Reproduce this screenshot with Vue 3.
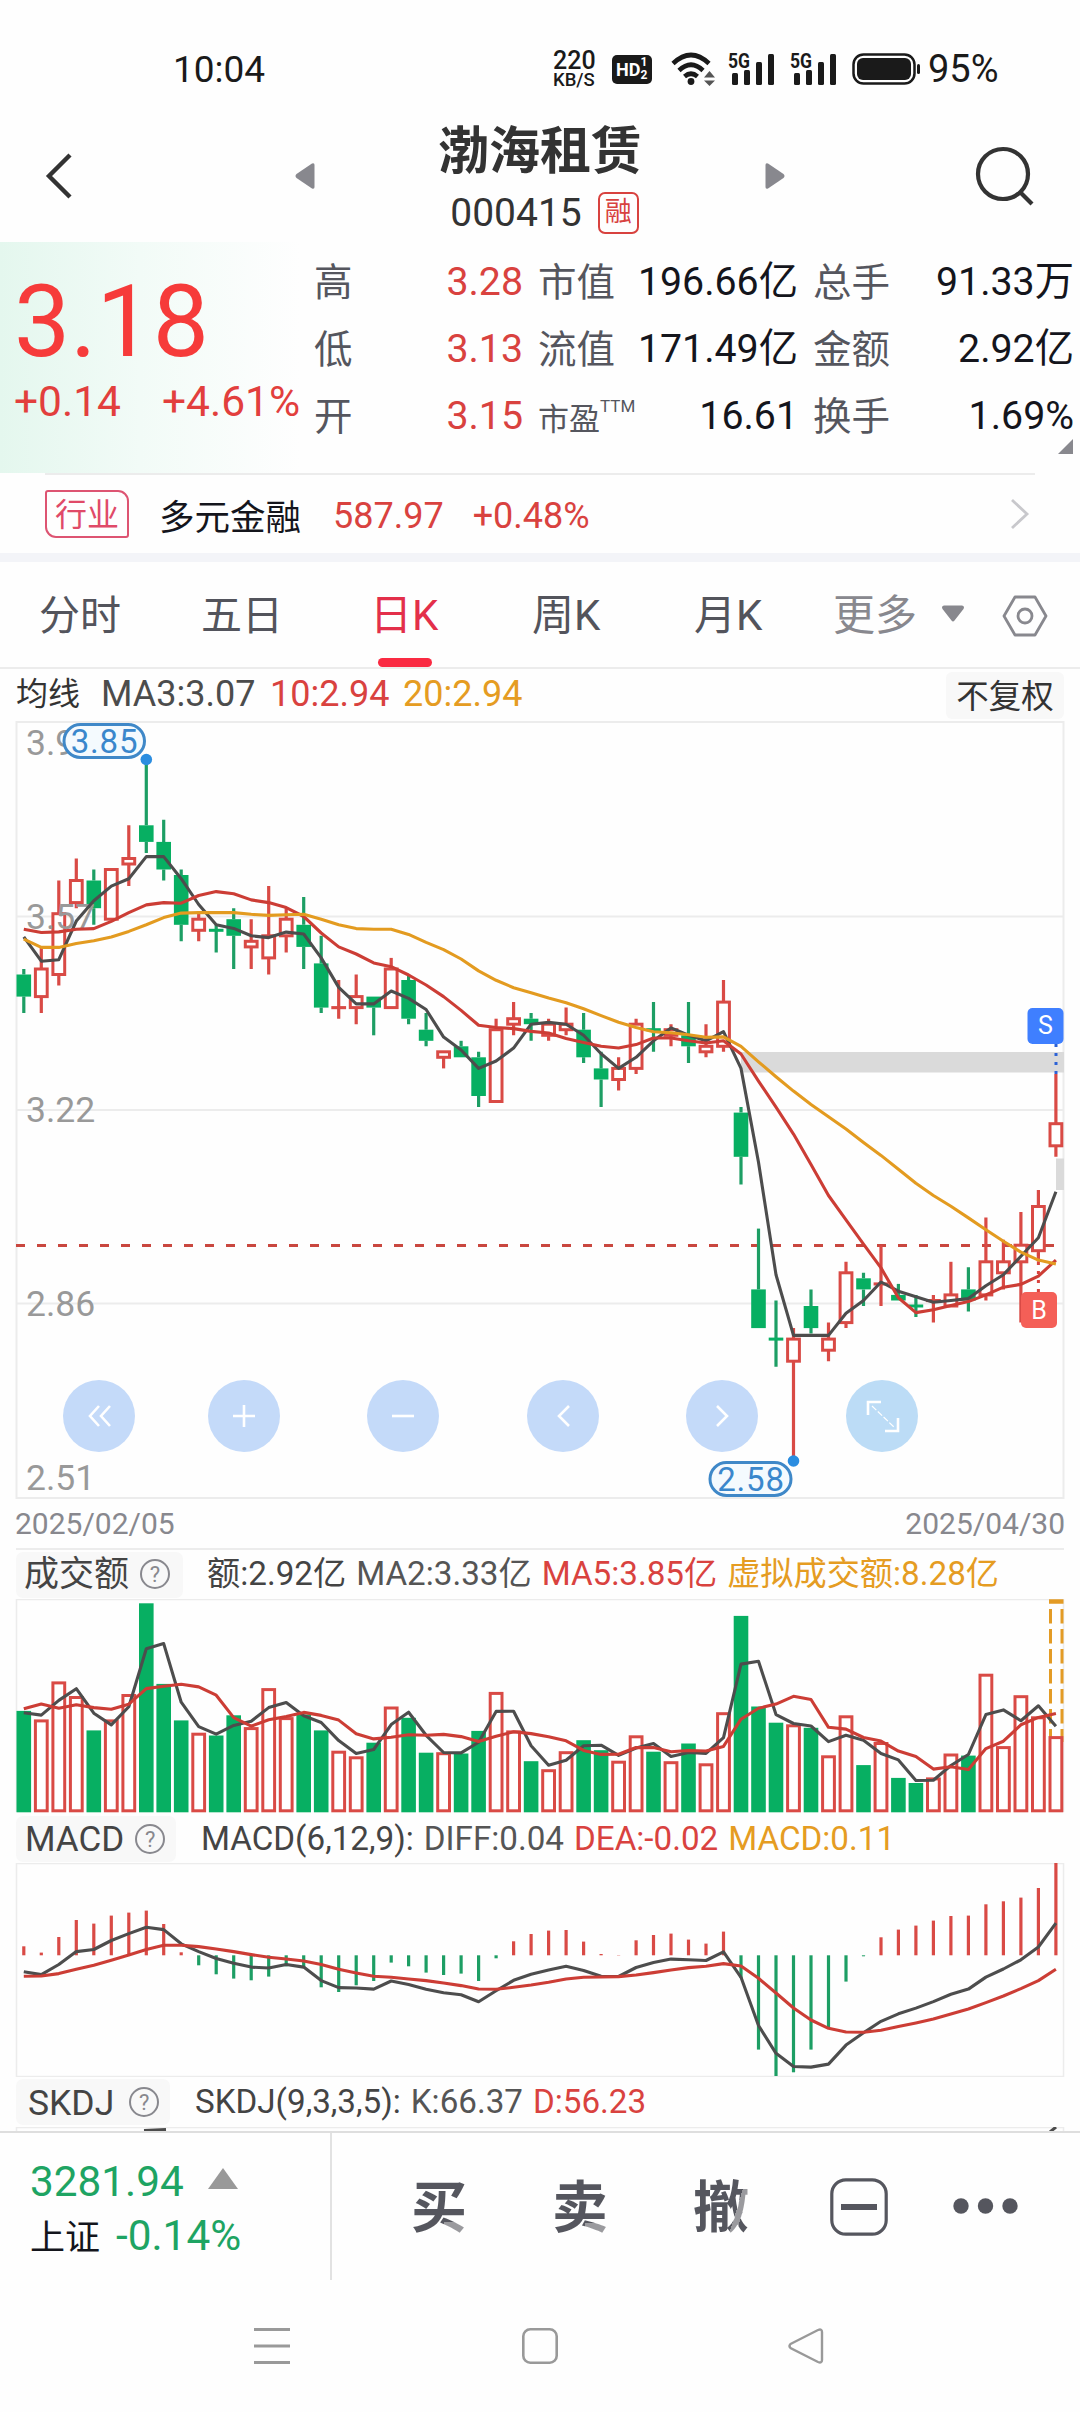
<template>
  <div class="page">
    <!-- 状态栏 -->
    <div class="status">
      <span class="time">10:04</span>
      <div class="speed">
        <b>220</b>
        <span>KB/S</span>
      </div>
      <div class="hd">HD<span><i>1</i><i>2</i></span></div>
      <svg class="wifi" width="46" height="34" viewBox="0 0 46 34">
        <g fill="none" stroke="#1a1a1a" stroke-width="4.6">
          <path d="M2 11.5 Q20 -5.500 38 11.500" />
          <path d="M8 18.500 Q20 7 32 18.500" />
          <path d="M13.500 24.500 Q20 19 26.500 24.500" />
        </g>
        <circle cx="20" cy="29.500" r="3.400" fill="#1a1a1a" />
        <path d="M38.500 19 l5.500 6.500 h-11 z M38.500 34 l5.500 -5.500 h-11 z" fill="#555" />
      </svg>
      <svg v-for="n in 2" :key="n" class="signal" width="48" height="34" viewBox="0 0 48 34">
        <text x="0" y="15.500" class="net" textLength="22" lengthAdjust="spacingAndGlyphs">5G</text>
        <rect x="4" y="21" width="6" height="12" rx="1.500" />
        <rect x="16" y="18" width="6" height="15" rx="1.500" />
        <rect x="28" y="10" width="6" height="23" rx="1.500" />
        <rect x="40" y="2" width="6" height="31" rx="1.500" />
      </svg>
      <svg class="battery" width="68" height="32" viewBox="0 0 68 32">
        <rect x="1.500" y="1.500" width="61" height="29" rx="10" fill="none" stroke="#1a1a1a" stroke-width="2.500" />
        <rect x="5" y="5" width="54" height="22" rx="6" fill="#1a1a1a" />
        <rect x="65" y="11" width="3" height="10" rx="1.500" fill="#1a1a1a" />
      </svg>
      <span class="percent">95%</span>
    </div>

    <!-- 标题 -->
    <div class="header">
      <svg class="back" width="30" height="48" viewBox="0 0 30 48">
        <path d="M26 3 L5 24 L26 45" fill="none" stroke="#333" stroke-width="4.400" />
      </svg>
      <svg width="20" height="28" viewBox="0 0 20 28">
        <path d="M1.500 12 L17 1.500 Q19.500 0.500 19.500 3 V25 Q19.500 27.500 17 26.500 L1.500 16 Q-0.500 14 1.500 12z" fill="#88888e" />
      </svg>
      <div class="stock">
        <h1>渤海租赁</h1>
        <div class="code">000415<span>融</span></div>
      </div>
      <svg width="20" height="28" viewBox="0 0 20 28">
        <path d="M18.500 12 L3 1.500 Q0.500 0.500 0.500 3 V25 Q0.500 27.500 3 26.500 L18.500 16 Q20.500 14 18.500 12z" fill="#88888e" />
      </svg>
      <svg class="search" width="60" height="60" viewBox="0 0 60 60">
        <g fill="none" stroke="#333" stroke-width="4.200">
          <circle cx="28" cy="28" r="25" />
          <path d="M45 46 L57 58" />
        </g>
      </svg>
    </div>

    <!-- 报价 -->
    <div class="quote">
      <div class="now">
        <div class="price">3.18</div>
        <div class="change"><span>+0.14</span><span>+4.61%</span></div>
      </div>
      <div class="cells">
        <template v-for="row in quotes" :key="row[0]">
          <span class="label">{{ row[0] }}</span>
          <span class="value red">{{ row[1] }}</span>
          <span class="label second" :class="{ small: row[6] }">{{ row[2] }}<sup v-if="row[6]">{{ row[6] }}</sup></span>
          <span class="value">{{ row[3] }}</span>
          <span class="label third">{{ row[4] }}</span>
          <span class="value">{{ row[5] }}</span>
        </template>
      </div>
      <i class="corner"></i>
    </div>

    <!-- 行业 -->
    <div class="industry">
      <span class="tag">行业</span>
      <span class="name">多元金融</span>
      <span class="red">587.97</span>
      <span class="red rate">+0.48%</span>
      <svg width="20" height="32" viewBox="0 0 20 32">
        <path d="M2 2 L17 16 L2 30" fill="none" stroke="#c8c8cc" stroke-width="2.800" />
      </svg>
    </div>

    <!-- 周期切换 -->
    <div class="tabs">
      <span v-for="tab in tabs" :key="tab" :class="{ active: tab === '日K' }">{{ tab }}</span>
      <span class="more">更多</span>
      <svg class="down" width="24" height="18" viewBox="0 0 24 18">
        <path d="M3 0.500 H21 Q24 1 22.500 4 L13.500 15.500 Q12 17.500 10.500 15.500 L1.500 4 Q0 1 3 0.500z" fill="#88888e" />
      </svg>
      <svg width="46" height="42" viewBox="0 0 46 42">
        <g fill="none" stroke="#88888e" stroke-width="2.800">
          <path d="M13 2 H33 L44 21 L33 40 H13 L2 21z" stroke-linejoin="round" />
          <circle cx="23" cy="21" r="7" />
        </g>
      </svg>
    </div>

    <!-- 均线 -->
    <div class="averages">
      <span class="ma-name">均线</span>
      <span class="ma3">MA3:3.07</span>
      <span class="red ma10">10:2.94</span>
      <span class="gold">20:2.94</span>
      <span class="right">不复权</span>
    </div>

    <!-- K线图 -->
    <svg class="chart" width="1080" height="778" viewBox="0 721 1080 778">
      <g fill="none" stroke="#ececec" stroke-width="2">
        <rect x="16.500" y="722" width="1047" height="776" />
        <path d="M16 916.500 H1064 M16 1110 H1064 M16 1303.500 H1064" />
      </g>
      <rect x="741" y="1052" width="323" height="20.500" fill="#dadada" />
      <rect x="1056" y="1158.500" width="8" height="31.500" fill="#dadada" />
      <path d="M16 1245.500 H1056" stroke="#c9473f" stroke-width="3" stroke-dasharray="9 12" />
      <g v-for="(c, i) in candles" :key="i">
        <path
          :d="`M${x(i)} ${y(c[2])} V${y(Math.max(c[0], c[1]))} M${x(i)} ${y(Math.min(c[0], c[1]))} V${y(c[3])}`"
          :stroke="isUp(i) ? UP : '#1d9e64'"
          stroke-width="3.200"
        />
        <rect
          v-if="isUp(i)"
          :x="x(i) - 5.9"
          :y="y(c[1])"
          width="11.800"
          :height="Math.max(y(c[0]) - y(c[1]), 0.1)"
          fill="#fff"
          :stroke="UP"
          stroke-width="3"
        />
        <rect
          v-else
          :x="x(i) - 7.3"
          :y="y(c[0]) - (c[0] === c[1] ? 1.5 : 0)"
          width="14.600"
          :height="Math.max(y(c[1]) - y(c[0]), 3)"
          :fill="DOWN"
        />
      </g>
      <g class="axis">
        <text x="26" y="754.500">3.93</text>
        <text x="26" y="929">3.57</text>
        <text x="26" y="1121.500">3.22</text>
        <text x="26" y="1315.500">2.86</text>
        <text x="26" y="1490">2.51</text>
      </g>
      <polyline :points="line(ma3, y)" class="line dark" />
      <polyline :points="line(ma10, y)" class="line crimson" />
      <polyline :points="line(ma20, y)" class="line amber" />

      <!-- 最高最低 -->
      <g class="pill">
        <rect x="64" y="724.500" width="80.500" height="33" rx="16.500" />
        <text x="104.500" y="752.500">3.85</text>
        <circle :cx="x(7)" cy="759.500" r="5.800" />
        <rect x="710" y="1462.500" width="81" height="33" rx="16.500" />
        <text x="751" y="1490.500">2.58</text>
        <circle :cx="x(44)" cy="1461" r="5.800" />
      </g>

      <!-- 买卖点 -->
      <path d="M1056 1044 V1074" stroke="#2c62d6" stroke-width="3" stroke-dasharray="3 6" />
      <path :d="`M${x(58)} 1253 V1292`" stroke="#d9433e" stroke-width="3" stroke-dasharray="3 6" />
      <rect x="1027.500" y="1008" width="36" height="36" rx="5" fill="#3f7fff" />
      <text x="1045.500" y="1034" class="mark">S</text>
      <rect x="1021" y="1292" width="36" height="36" rx="5" fill="#f45f57" />
      <text x="1039" y="1318.500" class="mark">B</text>

      <!-- 操作按钮 -->
      <g v-for="b in buttons" :key="b.x" :transform="`translate(${b.x} 1416)`">
        <circle r="36" :fill="b.color || '#c4daf9'" />
        <path :d="b.icon" fill="none" stroke="#fff" stroke-width="2.600" />
        <path v-if="b.thin" :d="b.thin" stroke="#fff" stroke-width="1.200" stroke-dasharray="6 2" />
      </g>
    </svg>
    <div class="dates"><span>2025/02/05</span><span>2025/04/30</span></div>

    <!-- 成交额 -->
    <div class="indicator first">
      <div class="kind amount">成交额<span class="help">?</span></div>
      <span>额:2.92亿</span>
      <span class="mid">MA2:3.33亿</span>
      <span class="red">MA5:3.85亿</span>
      <span class="gold">虚拟成交额:8.28亿</span>
    </div>
    <svg class="chart" width="1080" height="215" viewBox="0 0 1080 215">
      <path d="M16.500 213 V0.500 H1063.500 V213" fill="none" stroke="#ececec" stroke-width="1.500" />
      <path d="M1050.500 10 V143 M1062 10 V143" stroke="#e39b25" stroke-width="3" stroke-dasharray="14.500 5.500" />
      <path d="M1049 2.500 H1063.500" stroke="#e39b25" stroke-width="4.500" />
      <g v-for="(v, i) in amounts" :key="i">
        <rect
          v-if="isUp(i)"
          :x="x(i) - 5.9"
          :y="vy(v) + 1.5"
          width="11.800"
          :height="210.3 - vy(v)"
          fill="#fff"
          :stroke="UP"
          stroke-width="3"
        />
        <rect v-else :x="x(i) - 7.3" :y="vy(v)" width="14.600" :height="213.3 - vy(v)" :fill="DOWN" />
      </g>
      <polyline :points="line(amountMa2, vy)" class="line dark" />
      <polyline :points="line(amountMa5, vy)" class="line crimson" />
    </svg>

    <!-- MACD -->
    <div class="indicator">
      <div class="kind macd">MACD<span class="help">?</span></div>
      <span>MACD(6,12,9):</span>
      <span class="mid">DIFF:0.04</span>
      <span class="red">DEA:-0.02</span>
      <span class="gold">MACD:0.11</span>
    </div>
    <svg class="chart" width="1080" height="214" viewBox="0 0 1080 214">
      <rect x="16.500" y="0.500" width="1047" height="213" fill="none" stroke="#ececec" stroke-width="1.500" />
      <path
        v-for="(m, i) in macd"
        :key="i"
        :d="`M${x(i)} ${my(0)} V${my(m)}`"
        :stroke="m > 0 ? UP : '#1d9e64'"
        stroke-width="3.200"
      />
      <polyline :points="line(diff, my)" class="line dark" />
      <polyline :points="line(dea, my)" class="line crimson" />
    </svg>

    <!-- SKDJ -->
    <div class="indicator last">
      <div class="kind skdj">SKDJ<span class="help">?</span></div>
      <span>SKDJ(9,3,3,5):</span>
      <span class="mid">K:66.37</span>
      <span class="red">D:56.23</span>
    </div>
    <svg class="chart" width="1080" height="4" viewBox="0 0 1080 4">
      <path d="M16.500 4 V0.500 H1063.500 V4" fill="none" stroke="#ececec" stroke-width="1.500" />
      <path d="M144 3.500 L166 2.500 M1050 5 L1056 0" stroke="#4c4c4c" stroke-width="3" />
    </svg>

    <!-- 底部 -->
    <div class="footer">
      <div class="index">
        <div class="green">3281.94<i></i></div>
        <div><span class="market">上证</span><span class="green">-0.14%</span></div>
      </div>
      <div class="actions">
        <span class="buy">买</span>
        <span class="sell">卖</span>
        <span class="cancel">撤</span>
        <svg class="minus" width="58" height="58" viewBox="0 0 58 58">
          <rect x="1.800" y="1.800" width="54.400" height="54.400" rx="14" fill="none" stroke="#55565e" stroke-width="3.200" />
          <rect x="11" y="26" width="36" height="6" fill="#55565e" />
        </svg>
        <svg class="dots" width="66" height="16" viewBox="0 0 66 16">
          <g fill="#55565e">
            <circle cx="8" cy="8" r="7.700" />
            <circle cx="32.500" cy="8" r="7.700" />
            <circle cx="57" cy="8" r="7.700" />
          </g>
        </svg>
      </div>
    </div>

    <!-- 系统导航 -->
    <div class="nav">
      <svg width="36" height="36" viewBox="0 0 36 36">
        <path d="M0 1.500 H36 M0 18 H36 M0 34.500 H36" stroke="#999" stroke-width="3" />
      </svg>
      <svg width="36" height="36" viewBox="0 0 36 36">
        <rect x="1.300" y="1.300" width="33.400" height="33.400" rx="7" fill="none" stroke="#999" stroke-width="2.600" />
      </svg>
      <svg width="36" height="36" viewBox="0 0 36 36">
        <path d="M2.500 16 L30 2 Q34 0.500 34 4 V32 Q34 35.500 30 34 L2.500 20 Q0.500 18 2.500 16z" fill="none" stroke="#999" stroke-width="2.400" />
      </svg>
    </div>
  </div>
</template>

<script setup>
const UP = "#d94a45";
const DOWN = "#07af62";

const tabs = ["分时", "五日", "日K", "周K", "月K"];

const quotes = [
  ["高", "3.28", "市值", "196.66亿", "总手", "91.33万"],
  ["低", "3.13", "流值", "171.49亿", "金额", "2.92亿"],
  ["开", "3.15", "市盈", "16.61", "换手", "1.69%", "TTM"],
];

const buttons = [
  { x: 99, icon: "M0 -10 L-9 0 L0 10 M11 -10 L2 0 L11 10" },
  { x: 244, icon: "M-11 0 H11 M0 -11 V11" },
  { x: 403, icon: "M-11 0 H11" },
  { x: 563, icon: "M6 -10 L-4 0 L6 10" },
  { x: 722, icon: "M-5 -10 L5 0 L-5 10" },
  {
    x: 882,
    color: "#bcdcf6",
    icon: "M-14 -1 V-14 H-1 M16 2 V15 H3",
    thin: "M-10 -10 L12 11",
  },
];

// 开盘, 收盘, 最高, 最低 (单位: 分)
const candles = [
  [346, 342, 347, 339], [342, 347, 351, 339], [346, 357, 363, 344],
  [359, 363, 367, 358], [363, 358, 365, 355], [356, 365, 365, 356],
  [366, 367, 373, 362], [373, 370, 385, 368], [370, 365, 374, 363],
  [364, 355, 365, 352], [354, 356, 357, 352], [354, 354, 355, 350],
  [356, 353, 358, 347], [351, 352, 356, 347], [349, 353, 362, 346],
  [353, 356, 358, 350], [355, 351, 360, 347], [348, 340, 353, 339],
  [340, 340, 345, 338], [340, 342, 346, 337], [342, 340, 342, 335],
  [340, 347, 349, 340], [345, 338, 346, 337], [336, 334, 339, 333],
  [331, 332, 332, 329], [333, 331, 334, 331], [331, 324, 332, 322],
  [323, 336, 338, 323], [337, 338, 341, 335], [338, 337, 339, 334],
  [335, 337, 338, 334], [336, 337, 340, 335], [336, 331, 339, 330],
  [329, 327, 332, 322], [327, 329, 331, 325], [329, 337, 338, 328],
  [336, 336, 341, 332], [335, 336, 337, 333], [335, 333, 341, 330],
  [332, 333, 337, 331], [333, 341, 345, 332], [321, 313, 322, 308],
  [289, 282, 300, 282], [280, 280, 287, 275], [276, 280, 282, 258],
  [286, 282, 289, 281], [278, 280, 283, 276], [283, 292, 294, 282],
  [291, 289, 292, 286], [290, 290, 297, 286], [288, 287, 290, 287],
  [286, 286, 288, 284], [287, 287, 288, 283], [286, 288, 294, 286],
  [289, 287, 293, 285], [288, 294, 302, 287], [292, 294, 298, 289],
  [294, 297, 303, 283], [296, 304, 307, 294], [315, 319, 328, 313],
];

const flatUp = [18, 49, 52];

// 成交额 (亿)
const amounts = [
  3.95, 3.62, 5.1, 4.53, 3.19, 3.62, 4.61, 8.14, 5.0, 3.58, 3.1, 2.99, 3.78,
  3.32, 4.84, 3.71, 3.81, 3.19, 2.4, 2.18, 2.71, 4.12, 3.68, 2.32, 2.34, 2.29,
  3.17, 4.69, 3.19, 1.99, 1.68, 2.38, 2.81, 2.42, 2.01, 3.0, 2.36, 1.99, 2.68,
  1.91, 3.9, 7.65, 4.12, 3.49, 3.43, 3.29, 2.22, 3.78, 1.84, 2.74, 1.34, 1.14,
  1.36, 2.29, 2.21, 5.4, 2.58, 4.56, 3.74, 2.97,
];

const macd = [
  27, 8, 55, 106, 95, 119, 128, 134, 94, 9, -30, -57, -70, -75, -64, -33, -37,
  -96, -110, -90, -77, -22, -33, -52, -59, -55, -77, -9, 42, 64, 74, 76, 41, 4,
  1, 45, 61, 65, 47, 35, 71, -68, -283, -362, -351, -283, -215, -79, -3, 54, 77,
  89, 104, 118, 119, 153, 162, 173, 202, 277,
];

const dea = [
  -63, -62, -55, -42, -30, -15, 1, 17, 30, 30, 26, 19, 11, 2, -6, -11, -17, -28,
  -42, -53, -63, -66, -71, -76, -83, -91, -101, -102, -96, -89, -81, -71, -66,
  -65, -64, -59, -52, -44, -37, -33, -25, -32, -69, -113, -158, -194, -219,
  -230, -231, -225, -214, -203, -191, -176, -161, -142, -122, -100, -76, -42,
];

const diff = dea.map((d, i) => d + macd[i] / 2);

// 坐标换算
const x = (i) => +(23.8 + i * 17.493).toFixed(1);
const y = (p) => +(759 + (385 - p) * 5.525).toFixed(1);
const vy = (v) => +(213.3 - v * 25.67).toFixed(1);
const my = (m) => +(92.3 - m / 3).toFixed(1);

const isUp = (i) => candles[i][1] > candles[i][0] || flatUp.includes(i);

const line = (values, scale) =>
  values.map((v, i) => `${x(i)},${scale(v)}`).join(" ");

// 均线, head 为区间之前已有数据算出的值
const average = (values, n, head) =>
  values.map((v, i) =>
    i < n - 1
      ? head[i]
      : values.slice(i - n + 1, i + 1).reduce((a, b) => a + b, 0) / n
  );

const closes = candles.map((c) => c[1]);
const ma3 = average(closes, 3, [352.8, 348.4]);
const ma10 = average(closes, 10, [
  354.2, 353.6, 353.7, 354.2, 354.3, 355.6, 357.2, 358.6, 359,
]);
const ma20 = average(closes, 20, [
  352.4, 350.9, 350.9, 351.6, 352.1, 352.8, 353.8, 355, 356.3, 357.1, 357.2,
  357.2, 357.2, 356.9, 356.7, 356.8, 356.9, 356, 355,
]);
const amountMa2 = average(amounts, 2, [3.88]);
const amountMa5 = average(amounts, 5, [4.03, 4.22, 4.05, 4.19]);
</script>

<style>
body {
  margin: 0;
  background: #fefefe;
}
</style>

<style scoped>
.page {
  width: 1080px;
  height: 2412px;
  overflow: hidden;
  background: #fefefe;
  font-family: Roboto, "Noto Sans CJK SC", sans-serif;
  color: #14151c;
  white-space: nowrap;
}

svg {
  display: block;
  flex: none;
}

.red {
  color: #d9423f;
}

.gold {
  color: #e59c22;
}

.green {
  color: #1ea463;
}

/* 状态栏 */
.status {
  box-sizing: border-box;
  height: 110px;
  padding: 28px 0 0 173px;
  display: flex;
  align-items: center;
  color: #1a1a1a;
}

.time {
  width: 380px;
  font-size: 37px;
}

.speed {
  width: 59px;
  display: flex;
  flex-direction: column;
  font-size: 18.5px;
  line-height: 18px;
  font-weight: 500;
}

.speed b {
  font-size: 25px;
  line-height: 21px;
  font-weight: 500;
}

.hd {
  box-sizing: border-box;
  width: 40px;
  height: 29px;
  padding-left: 4px;
  margin-right: 19px;
  border-radius: 5px;
  display: flex;
  align-items: center;
  background: #1a1a1a;
  color: #fff;
  font-size: 18px;
  font-weight: 700;
}

.hd span {
  display: flex;
  flex-direction: column;
  font-size: 12px;
  line-height: 13px;
}

.hd i {
  font-style: normal;
}

.wifi {
  margin-right: 11px;
}

.signal {
  margin-right: 14px;
  fill: #1a1a1a;
  overflow: visible;
}

.net {
  font-size: 20px;
  font-weight: 700;
}

.battery {
  margin-right: 8px;
}

.percent {
  font-size: 38px;
}

/* 标题 */
.header {
  height: 132px;
  display: flex;
  align-items: center;
}

.back {
  margin: 0 221px 0 44px;
}

.stock {
  width: 450px;
  padding-top: 11px;
  display: flex;
  flex-direction: column;
  align-items: center;
}

.stock h1 {
  margin: 0;
  font-size: 51px;
  line-height: 66px;
  font-weight: 700;
  color: #333;
}

.code {
  display: flex;
  align-items: center;
  gap: 16px;
  margin: -3px 0 0 9px;
  font-size: 39px;
  line-height: 62px;
  color: #333;
}

.code span {
  width: 37px;
  height: 38px;
  border: 2.5px solid #d8423f;
  border-radius: 7px;
  text-align: center;
  font-size: 27px;
  line-height: 37px;
  color: #d8423f;
}

.search {
  margin-left: 190px;
}

/* 报价 */
.quote {
  position: relative;
  box-sizing: border-box;
  height: 231px;
  display: flex;
  background: linear-gradient(90deg, #e4f7ee 0, #f2fbf7 140px, #fefefe 300px);
}

.now {
  width: 314px;
  color: #e23f3d;
}

.price {
  margin: 27px 0 0 14px;
  height: 105px;
  font-size: 100px;
  line-height: 106px;
  color: #f63b3a;
}

.change {
  display: flex;
  gap: 41px;
  padding-left: 14px;
  font-size: 42.5px;
  line-height: 56px;
}

.cells {
  flex: none;
  width: 760px;
  height: 201px;
  padding-top: 7px;
  display: grid;
  grid-template-columns: 60px 149px 109px 166px 109px 167px;
  grid-auto-rows: 67px;
  line-height: 67px;
}

.label {
  font-size: 38.5px;
  color: #55565e;
}

.second {
  padding-left: 15px;
}

.third {
  padding-left: 15px;
}

.small {
  font-size: 31px;
  padding-top: 3px;
}

.small sup {
  position: relative;
  top: -18px;
  vertical-align: baseline;
  font-size: 17px;
  line-height: 0;
}

.value {
  text-align: right;
  font-size: 39.3px;
}

.corner {
  position: absolute;
  left: 1058px;
  top: 197px;
  border-left: 15px solid transparent;
  border-bottom: 15px solid #88888e;
}

/* 行业 */
.industry {
  height: 78px;
  margin: 0 45px;
  border-top: 2px solid #ececec;
  display: flex;
  align-items: center;
  font-size: 36px;
}

.industry > .red {
  padding-top: 4px;
}

.tag {
  box-sizing: border-box;
  width: 84px;
  height: 48px;
  margin-right: 30px;
  border: 2px solid #dd5472;
  border-radius: 3px 11px 3px 11px;
  text-align: center;
  font-size: 32px;
  line-height: 46px;
  color: #e04a68;
}

.name {
  width: 174px;
  font-size: 35.5px;
}

.rate {
  margin-left: 29px;
}

.industry svg {
  margin-left: auto;
  margin-right: 5px;
}

/* 周期切换 */
.tabs {
  box-sizing: border-box;
  height: 116px;
  padding: 3px 0 0 39px;
  border-top: 9px solid #f3f4f8;
  border-bottom: 2px solid #ececec;
  display: flex;
  align-items: center;
  font-size: 41px;
  color: #53545c;
}

.tabs span {
  position: relative;
  width: 162px;
  line-height: 104px;
}

.tabs span:nth-child(2) {
  width: 169px;
}

.tabs span:nth-child(n + 3) {
  font-size: 42px;
}

.tabs .active {
  color: #e32f4a;
}

.tabs .active::after {
  content: "";
  position: absolute;
  left: 8px;
  bottom: 1px;
  width: 54px;
  height: 9px;
  border-radius: 5px;
  background: #fa2a42;
}

.tabs span:nth-child(5) {
  width: 139px;
}

.tabs .more {
  width: 108px;
  font-size: 41px;
  color: #88888e;
}

.down {
  margin: 0 37px 4px 0;
}

/* 均线 */
.averages {
  height: 52px;
  padding: 0 16px;
  display: flex;
  align-items: center;
  font-size: 36px;
  line-height: 46px;
  color: #4c4c4c;
}

.averages > span {
  margin-top: -2px;
}

.ma-name {
  width: 85px;
  font-size: 32px;
  color: #333;
}

.ma3 {
  width: 169px;
}

.ma10 {
  width: 133px;
}

.averages > .right {
  width: 118px;
  height: 47px;
  margin: 0 0 0 auto;
  border-radius: 6px;
  background: #f8f8f8;
  text-align: center;
  font-size: 32.5px;
  line-height: 50px;
  color: #333;
}

/* 图表 */
.line {
  fill: none;
  stroke-width: 3.1;
  stroke-linejoin: round;
}

.dark {
  stroke: #4d4d4d;
}

.crimson {
  stroke: #cc3d35;
}

.amber {
  stroke: #e39b20;
}

.axis {
  font-size: 35.5px;
  fill: #999;
}

.pill rect {
  fill: #f4fafe;
  stroke: #3f88c8;
  stroke-width: 3;
}

.pill text {
  font-size: 33px;
  letter-spacing: 0.8px;
  text-anchor: middle;
  fill: #3a87cc;
}

.pill circle {
  fill: #2b8de0;
}

.mark {
  font-size: 25px;
  text-anchor: middle;
  fill: #fff;
}

.dates {
  box-sizing: border-box;
  height: 51px;
  padding: 0 15px;
  display: flex;
  justify-content: space-between;
  font-size: 30px;
  line-height: 49px;
  color: #88888e;
  background: linear-gradient(#ececec, #ececec) 16px 100% / 1048px 2px no-repeat;
}

/* 指标标题 */
.indicator {
  height: 49px;
  padding-left: 16px;
  display: flex;
  align-items: center;
  gap: 10px;
  font-size: 33.2px;
  line-height: 40px;
  color: #444;
}

.indicator.first > span {
  margin-top: -2px;
}

.indicator.last {
  height: 50px;
}

.mid {
  color: #555;
}

.kind {
  box-sizing: border-box;
  height: 46px;
  border-radius: 7px;
  display: flex;
  align-items: center;
  background: #f8f8f8;
  font-size: 35px;
}

.amount {
  width: 167px;
  padding-left: 8px;
  margin-right: 14px;
}

.macd {
  width: 160px;
  padding: 2px 0 0 9px;
  margin-right: 15px;
}

.skdj {
  width: 154px;
  padding: 2px 0 0 12px;
  margin-right: 15px;
  font-size: 35.5px;
}

.help {
  box-sizing: border-box;
  flex: none;
  width: 30px;
  height: 30px;
  margin: -2px 0 0 11px;
  border: 2px solid #88888e;
  border-radius: 50%;
  text-align: center;
  font-size: 22px;
  line-height: 27px;
  color: #88888e;
}

.skdj .help {
  margin-left: 15px;
}

/* 底部 */
.footer {
  box-sizing: border-box;
  height: 149px;
  border-top: 2px solid #dedede;
  display: flex;
}

.index {
  box-sizing: border-box;
  width: 332px;
  padding: 22px 0 0 30px;
  border-right: 2px solid #e2e2e2;
  font-size: 42.3px;
  line-height: 54px;
}

.index i {
  display: inline-block;
  margin-left: 24px;
  border: 15px solid transparent;
  border-top: 0;
  border-bottom: 21px solid #999;
  vertical-align: 7px;
}

.market {
  display: inline-block;
  width: 86px;
  font-size: 35px;
}

.actions {
  height: 147px;
  padding-left: 79px;
  display: flex;
  align-items: center;
}

.actions span {
  width: 56px;
  margin: 3px 85px 0 0;
  font-size: 56px;
  line-height: 66px;
  font-weight: 700;
  color: transparent;
  background: linear-gradient(#9a9a9e, #9a9a9e) 100% 100% / 23px 19px no-repeat #55565e;
  background-clip: text;
}

.actions .sell {
  background-size: 23px 18px;
}

.actions .cancel {
  margin-right: 81px;
  background: linear-gradient(107deg, #55565e 71%, #9a9a9e 71%, #9a9a9e 80%, #55565e 80%);
  background-clip: text;
}

.minus {
  margin-right: 65px;
}

.dots {
  margin-top: -2px;
}

/* 系统导航 */
.nav {
  height: 132px;
  padding-right: 2px;
  display: flex;
  justify-content: center;
  align-items: center;
  gap: 232px;
}

.nav svg:last-child {
  margin-left: -2px;
}
</style>
